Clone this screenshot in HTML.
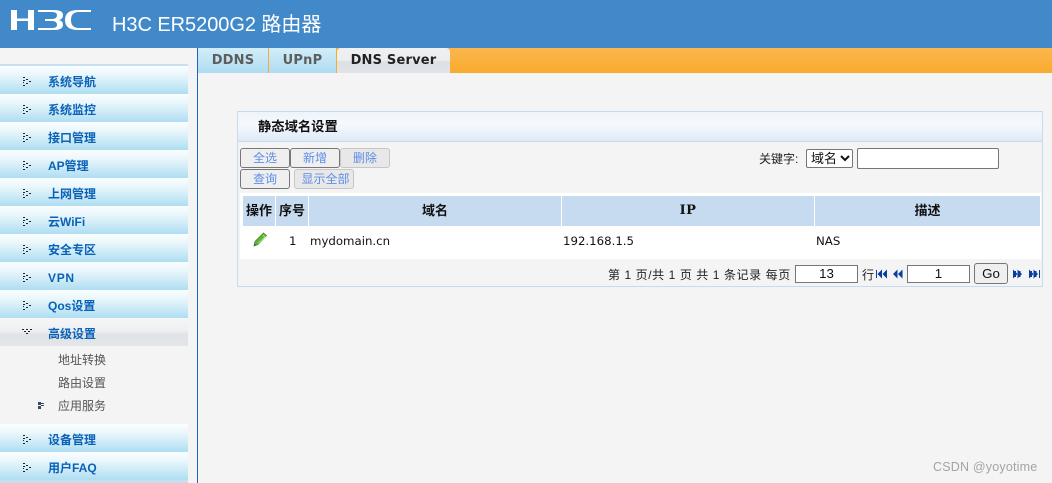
<!DOCTYPE html>
<html><head><meta charset="utf-8"><style>
*{box-sizing:border-box}
html,body{margin:0;padding:0;width:1052px;height:483px;overflow:hidden;background:#f4f4f4;font-family:"Liberation Sans","Noto Sans CJK SC",sans-serif;font-size:12px;color:#222}
.a{position:absolute;white-space:nowrap}
#hd{left:0;top:0;width:1052px;height:48px;background:#4189c9}
#ttl{left:112px;top:11px;font-size:20px;line-height:28px;color:#fff;letter-spacing:-.05px}
.m{left:0;width:188px;height:28px;background:linear-gradient(#fbfeff 0,#eaf7fc 30%,#c9e9f6 70%,#aeddf2 100%)}
.m span{position:absolute;left:48px;top:8px;font-size:12px;line-height:16px;font-weight:bold;color:#0a62b8}
.m.on{background:linear-gradient(#f6f6f6,#eef0f2 45%,#e0e3e6 60%,#e4e6e9)}
.m svg{position:absolute;left:22px;top:10px}
.s{left:58px;font-size:12px;line-height:16px;color:#555}
.tab{top:48px;height:25px;background:linear-gradient(#d2edf8,#aedcf2);color:#5d5d5d;font-weight:bold;font-size:13px;line-height:25px;text-align:center;letter-spacing:.2px;font-family:"DejaVu Sans",sans-serif}
.btn{height:20px;border:1px solid #777;border-radius:3px;background:#efefef;color:#5e8ee8;font-size:12px;line-height:18px;text-align:center}
.dis{border-color:#c6c6c6;background:#e8e8e8}
.th{top:196px;height:30px;background:#c6dbf0;font-weight:bold;color:#111;text-align:center;line-height:30px;font-size:13px}
.td{top:233px;line-height:16px;font-size:11.75px;color:#111;font-family:"DejaVu Sans",sans-serif}
.inp{background:#fff;border:1px solid #767676;text-align:center;font-size:13.3px;line-height:15px;color:#111}
</style></head><body>
<div class="a" id="hd"></div>
<svg class="a" style="left:10px;top:9px" width="82" height="23" viewBox="0 0 82 23" role="img" aria-label="H3C logo">
<g fill="#fff">
<path d="M1 1h6v20H1zM18 1h6v20h-6zM7 9.500h11V12H7z"/>
<path d="M28 1H44Q53 1 53 6Q53 10 49 11Q53 12 53 16Q53 21 44 21H28V19H42Q47 19 47 16Q47 12 42 12H35V10H42Q47 10 47 6Q47 3 42 3H28Z"/>
<path d="M81 1H68Q55 1 55 11Q55 21 68 21H81V19H69Q61 19 61 11Q61 3 69 3H81Z"/>
</g></svg>
<div class="a" id="ttl">H3C ER5200G2 路由器</div>

<div class="a" style="left:197px;top:48px;width:1px;height:435px;background:#1a66c2"></div>
<div class="a" style="left:0;top:64px;width:188px;height:2px;background:#c8dff0"></div>

<div class="a m" style="top:66px"><svg width="10" height="11"><path d="M1 1h2v1H1zM4 3h2v1H4zM7 5h2v1H7zM4 7h2v1H4zM1 9h2v1H1zM1 4h2v1H1zM1 6h1v1H1z" fill="#223"/></svg><span>系统导航</span></div>
<div class="a m" style="top:94px"><svg width="10" height="11"><path d="M1 1h2v1H1zM4 3h2v1H4zM7 5h2v1H7zM4 7h2v1H4zM1 9h2v1H1zM1 4h2v1H1zM1 6h1v1H1z" fill="#223"/></svg><span>系统监控</span></div>
<div class="a m" style="top:122px"><svg width="10" height="11"><path d="M1 1h2v1H1zM4 3h2v1H4zM7 5h2v1H7zM4 7h2v1H4zM1 9h2v1H1zM1 4h2v1H1zM1 6h1v1H1z" fill="#223"/></svg><span>接口管理</span></div>
<div class="a m" style="top:150px"><svg width="10" height="11"><path d="M1 1h2v1H1zM4 3h2v1H4zM7 5h2v1H7zM4 7h2v1H4zM1 9h2v1H1zM1 4h2v1H1zM1 6h1v1H1z" fill="#223"/></svg><span>AP管理</span></div>
<div class="a m" style="top:178px"><svg width="10" height="11"><path d="M1 1h2v1H1zM4 3h2v1H4zM7 5h2v1H7zM4 7h2v1H4zM1 9h2v1H1zM1 4h2v1H1zM1 6h1v1H1z" fill="#223"/></svg><span>上网管理</span></div>
<div class="a m" style="top:206px"><svg width="10" height="11"><path d="M1 1h2v1H1zM4 3h2v1H4zM7 5h2v1H7zM4 7h2v1H4zM1 9h2v1H1zM1 4h2v1H1zM1 6h1v1H1z" fill="#223"/></svg><span>云WiFi</span></div>
<div class="a m" style="top:234px"><svg width="10" height="11"><path d="M1 1h2v1H1zM4 3h2v1H4zM7 5h2v1H7zM4 7h2v1H4zM1 9h2v1H1zM1 4h2v1H1zM1 6h1v1H1z" fill="#223"/></svg><span>安全专区</span></div>
<div class="a m" style="top:262px"><svg width="10" height="11"><path d="M1 1h2v1H1zM4 3h2v1H4zM7 5h2v1H7zM4 7h2v1H4zM1 9h2v1H1zM1 4h2v1H1zM1 6h1v1H1z" fill="#223"/></svg><span style="letter-spacing:.7px">VPN</span></div>
<div class="a m" style="top:290px"><svg width="10" height="11"><path d="M1 1h2v1H1zM4 3h2v1H4zM7 5h2v1H7zM4 7h2v1H4zM1 9h2v1H1zM1 4h2v1H1zM1 6h1v1H1z" fill="#223"/></svg><span>Qos设置</span></div>
<div class="a m on" style="top:318px"><svg width="11" height="9" style="top:10px"><path d="M0 1h2v1H0zM4 1h2v1H4zM8 1h2v1H8zM2 3h2v1H2zM6 3h2v1H6zM4 5h2v1H4z" fill="#223"/></svg><span>高级设置</span></div>
<div class="a s" style="top:352px">地址转换</div>
<div class="a s" style="top:375px">路由设置</div>
<svg class="a" style="left:38px;top:402px" width="7" height="7"><path d="M0 0h3v1h3v1H3v1H0zM0 4h3v3H0z M3 3h3v1H3z" fill="#3a4a5e"/></svg>
<div class="a s" style="top:398px">应用服务</div>
<div class="a m" style="top:424px"><svg width="10" height="11"><path d="M1 1h2v1H1zM4 3h2v1H4zM7 5h2v1H7zM4 7h2v1H4zM1 9h2v1H1zM1 4h2v1H1zM1 6h1v1H1z" fill="#223"/></svg><span>设备管理</span></div>
<div class="a m" style="top:452px"><svg width="10" height="11"><path d="M1 1h2v1H1zM4 3h2v1H4zM7 5h2v1H7zM4 7h2v1H4zM1 9h2v1H1zM1 4h2v1H1zM1 6h1v1H1z" fill="#223"/></svg><span>用户FAQ</span></div>
<div class="a" style="left:0;top:480px;width:188px;height:3px;background:#c8dff0"></div>

<div class="a" style="left:198px;top:48px;width:854px;height:25px;background:linear-gradient(#fbb64d,#f9ab2e)"></div>
<div class="a tab" style="left:198px;width:70px">DDNS</div>
<div class="a" style="left:268px;top:48px;width:1px;height:25px;background:#f6ab37"></div>
<div class="a tab" style="left:269px;width:67px">UPnP</div>
<div class="a" style="left:336px;top:48px;width:1px;height:25px;background:#f6ab37"></div>
<div class="a tab" style="left:337px;width:113px;border-radius:4px 4px 0 0;background:linear-gradient(#eef0f2 0,#ebedef 50%,#dce0e4 55%,#e0e3e7);color:#222">DNS Server</div>

<div class="a" style="left:237px;top:111px;width:806px;height:176px;border:1px solid #c6dbf0;background:#f4f4f4"></div>
<div class="a" style="left:238px;top:112px;width:804px;height:30px;background:linear-gradient(#eef4fb,#f6f9fd 40%,#dfeaf7);border-bottom:1px solid #c6dbf0"></div>
<div class="a" style="left:258px;top:119px;font-weight:bold;font-size:13.3px;line-height:16px;color:#111">静态域名设置</div>

<div class="a btn" style="left:240px;top:148px;width:50px">全选</div>
<div class="a btn" style="left:290px;top:148px;width:50px">新增</div>
<div class="a btn dis" style="left:340px;top:148px;width:50px">删除</div>
<div class="a btn" style="left:240px;top:169px;width:50px">查询</div>
<div class="a btn dis" style="left:294px;top:169px;width:60px;padding-left:3px">显示全部</div>

<div class="a" style="left:759px;top:151px;line-height:16px;color:#222;font-size:12px">关键字:</div>
<div class="a" style="left:806px;top:149px;width:47px;height:19px;background:#fff;border:1px solid #767676;border-radius:2px;font-size:13px;line-height:17px;padding-left:4px;color:#111">域名<svg style="position:absolute;left:33px;top:5px" width="10" height="7"><path d="M1 1L5 5L9 1" fill="none" stroke="#111" stroke-width="2"/></svg></div>
<div class="a" style="left:857px;top:148px;width:142px;height:21px;background:#fff;border:1px solid #767676;border-radius:2px"></div>

<div class="a" style="left:240px;top:193px;width:801px;height:66px;background:#fff"></div>
<div class="a th" style="left:243px;width:32px">操作</div>
<div class="a th" style="left:276px;width:32px">序号</div>
<div class="a th" style="left:309px;width:252px">域名</div>
<div class="a th" style="left:562px;width:252px;font-family:'DejaVu Serif',serif;font-size:13px;letter-spacing:.5px">IP</div>
<div class="a th" style="left:815px;width:225px">描述</div>

<svg class="a" style="left:252px;top:232px" width="16" height="15" viewBox="0 0 16 15"><path d="M11.500 1L14.500 3.500L6 12.500L2 14L3 9.500Z" fill="#5fb336" stroke="#3f8a2a" stroke-width=".8"/><path d="M11 3L13 5L6 11.500" fill="none" stroke="#a5e06a"/><path d="M2 14L2.600 11.500L4.500 13.200Z" fill="#555"/></svg>
<div class="a td" style="left:289px">1</div>
<div class="a td" style="left:310px">mydomain.cn</div>
<div class="a td" style="left:563px">192.168.1.5</div>
<div class="a td" style="left:816px">NAS</div>

<div class="a" style="left:608px;top:267px;line-height:16px;letter-spacing:.58px;color:#222">第 1 页/共 1 页 共 1 条记录 每页</div>
<div class="a inp" style="left:795px;top:265px;width:63px;height:18px">13</div>
<div class="a" style="left:862px;top:267px;line-height:16px;color:#222">行</div>
<svg class="a" style="left:876px;top:269px" width="11" height="10"><path d="M0 1h1v8H0zM6 .5V9.500L1.500 5zM11 .5V9.500L6.500 5z" fill="#0b3d9c"/></svg>
<svg class="a" style="left:892px;top:269px" width="11" height="10"><path d="M5.500 .5V9.500L1 5zM10.500 .5V9.500L6 5z" fill="#0b3d9c"/></svg>
<div class="a inp" style="left:907px;top:265px;width:63px;height:18px">1</div>
<div class="a" style="left:974px;top:263px;width:34px;height:21px;border:1px solid #767676;border-radius:3px;background:#efefef;text-align:center;font-size:13.3px;line-height:19px;color:#111">Go</div>
<svg class="a" style="left:1013px;top:269px" width="11" height="10"><path d="M0 .5V9.500L4.500 5zM4.500 .5V9.500L9 5z" fill="#0b3d9c"/><path d="M0 2h3v6H0zM4.500 2h3v6H4.500z" fill="#0b3d9c"/></svg>
<svg class="a" style="left:1029px;top:269px" width="12" height="10"><path d="M0 .5V9.500L4.500 5zM4.500 .5V9.500L9 5z" fill="#0b3d9c"/><path d="M0 2h3v6H0zM4.500 2h3v6H4.500zM10 1h1v8h-1z" fill="#0b3d9c"/></svg>

<div class="a" style="left:933px;top:459px;font-size:12.500px;line-height:16px;color:#a4a4a4;letter-spacing:.2px">CSDN @yoyotime</div>
</body></html>
